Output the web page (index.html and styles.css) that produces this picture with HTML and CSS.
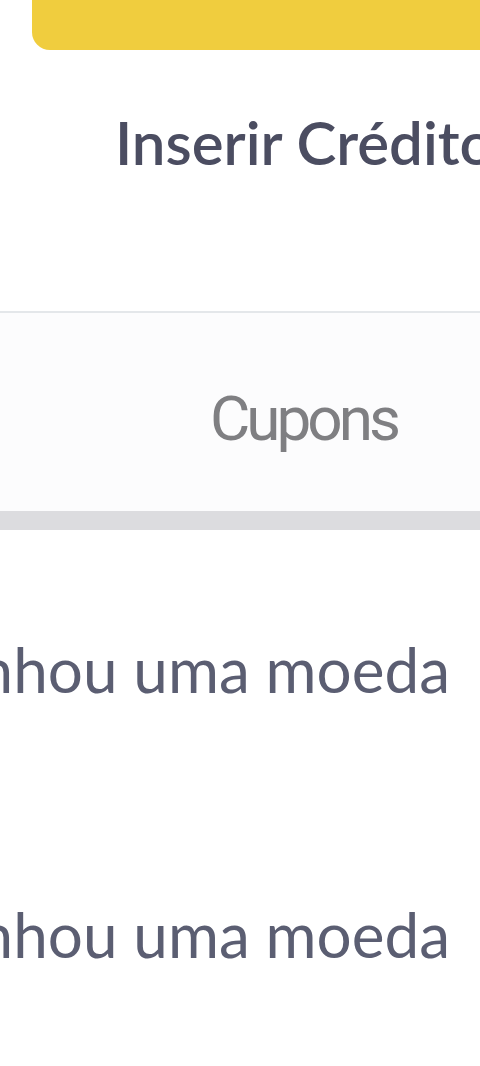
FILE: index.html
```html
<!DOCTYPE html>
<html lang="pt-BR">
<head>
    <meta charset="UTF-8">
    <meta name="viewport" content="width=device-width, initial-scale=1.0">
    <title>Carteira</title>
    <link rel="stylesheet" href="styles.css">
</head>
<body>
    <!-- Botão principal -->
    <div class="main-btn"></div>

    <a class="credit-link" href="#">Inserir Crédito</a>

    <!-- Abas -->
    <nav class="tabs">
        <span class="tab">Cupons</span>
    </nav>

    <!-- Lista de notificações -->
    <ul class="feed">
        <li class="feed-item"><span>Você ganhou uma moeda</span></li>
        <li class="feed-item"><span>Você ganhou uma moeda</span></li>
    </ul>
</body>
</html>
```

FILE: styles.css
```css
body {
    margin: 0;
    background-color: #fff;
    font-family: Lato, "Open Sans", sans-serif;
    overflow: hidden;
}
.main-btn {
    margin-left: 32px;
    height: 50px;
    background-color: #f0cd3e;
    border-bottom-left-radius: 18px;
}
.credit-link {
    display: block;
    margin-top: 62px;
    padding-left: 115px;
    font-size: 60px;
    line-height: 1;
    font-weight: 600;
    color: #4b4d61;
    text-decoration: none;
    white-space: nowrap;
    overflow: hidden;
}
.tabs {
    margin-top: 139px;
    border-top: 2px solid #e4e7ea;
    border-bottom: 19px solid #dcdcdf;
    background-color: #fcfcfd;
    padding: 75px 0 61px 210px;
}
.tab {
    display: block;
    font-family: Roboto, sans-serif;
    font-size: 62px;
    line-height: 1;
    letter-spacing: -4px;
    color: #7f7f82;
}
.feed {
    list-style: none;
    margin: 0;
    padding: 0;
}
.feed-item {
    display: flex;
    justify-content: flex-end;
    padding: 108px 30px 95px 0;
    font-size: 62px;
    line-height: 1;
    color: #5b5e72;
    white-space: nowrap;
    overflow: hidden;
}
```
